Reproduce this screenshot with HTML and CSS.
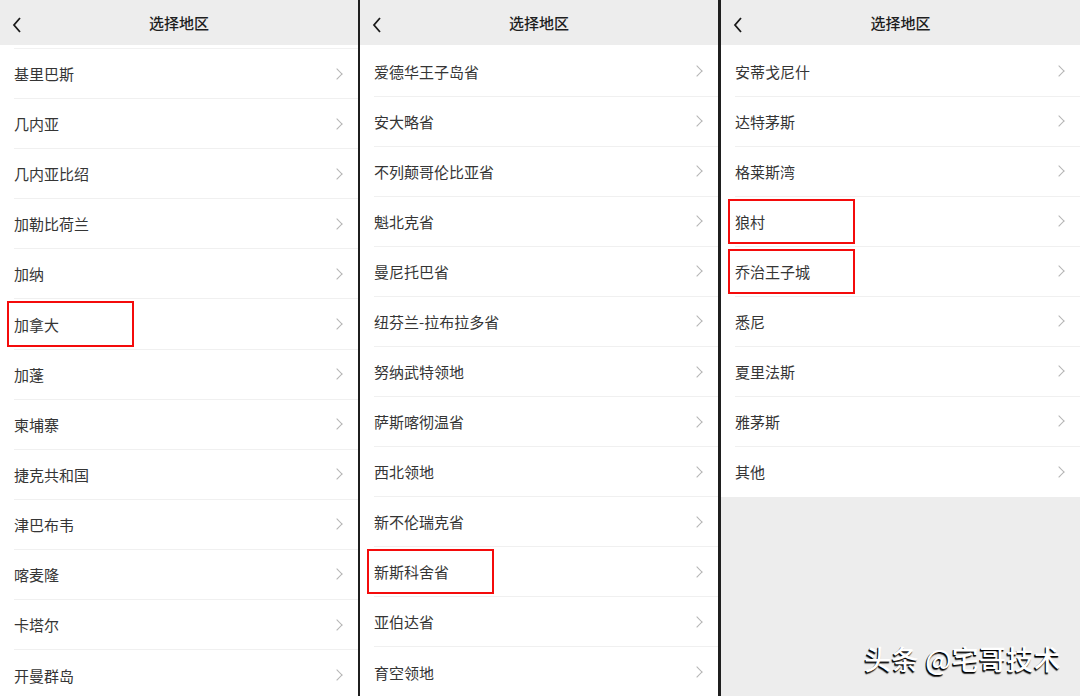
FILE: index.html
```html
<!DOCTYPE html>
<html lang="zh-CN">
<head>
  <meta charset="UTF-8" />
  <meta name="viewport" content="width=device-width, initial-scale=1.0" />
  <title>选择地区</title>
  <link rel="stylesheet" href="styles.css">
</head>
<body>
  <div class="screens">
    <!-- Pantalla 1 -->
    <section class="screen screen--first">
      <header class="topbar">
        <svg class="back" width="10" height="16" viewBox="0 0 10 16"><path d="M8 1 L2 8 L8 15" fill="none" stroke="#1a1a1a" stroke-width="1.8"/></svg>
        <h1>选择地区</h1>
      </header>
      <ul class="list list--scrolled">
        <li class="row"><span>基里巴斯</span><i class="chev"></i></li>
        <li class="row"><span>几内亚</span><i class="chev"></i></li>
        <li class="row"><span>几内亚比绍</span><i class="chev"></i></li>
        <li class="row"><span>加勒比荷兰</span><i class="chev"></i></li>
        <li class="row"><span>加纳</span><i class="chev"></i></li>
        <li class="row row--marked"><span>加拿大</span><i class="chev"></i></li>
        <li class="row"><span>加蓬</span><i class="chev"></i></li>
        <li class="row"><span>柬埔寨</span><i class="chev"></i></li>
        <li class="row"><span>捷克共和国</span><i class="chev"></i></li>
        <li class="row"><span>津巴布韦</span><i class="chev"></i></li>
        <li class="row"><span>喀麦隆</span><i class="chev"></i></li>
        <li class="row"><span>卡塔尔</span><i class="chev"></i></li>
        <li class="row"><span>开曼群岛</span><i class="chev"></i></li>
      </ul>
    </section>

    <!-- Pantalla 2 -->
    <section class="screen screen--second">
      <header class="topbar">
        <svg class="back" width="10" height="16" viewBox="0 0 10 16"><path d="M8 1 L2 8 L8 15" fill="none" stroke="#1a1a1a" stroke-width="1.8"/></svg>
        <h1>选择地区</h1>
      </header>
      <ul class="list">
        <li class="row"><span>爱德华王子岛省</span><i class="chev"></i></li>
        <li class="row"><span>安大略省</span><i class="chev"></i></li>
        <li class="row"><span>不列颠哥伦比亚省</span><i class="chev"></i></li>
        <li class="row"><span>魁北克省</span><i class="chev"></i></li>
        <li class="row"><span>曼尼托巴省</span><i class="chev"></i></li>
        <li class="row"><span>纽芬兰-拉布拉多省</span><i class="chev"></i></li>
        <li class="row"><span>努纳武特领地</span><i class="chev"></i></li>
        <li class="row"><span>萨斯喀彻温省</span><i class="chev"></i></li>
        <li class="row"><span>西北领地</span><i class="chev"></i></li>
        <li class="row"><span>新不伦瑞克省</span><i class="chev"></i></li>
        <li class="row row--marked"><span>新斯科舍省</span><i class="chev"></i></li>
        <li class="row"><span>亚伯达省</span><i class="chev"></i></li>
        <li class="row"><span>育空领地</span><i class="chev"></i></li>
      </ul>
    </section>

    <!-- Pantalla 3 -->
    <section class="screen screen--last">
      <header class="topbar">
        <svg class="back" width="10" height="16" viewBox="0 0 10 16"><path d="M8 1 L2 8 L8 15" fill="none" stroke="#1a1a1a" stroke-width="1.8"/></svg>
        <h1>选择地区</h1>
      </header>
      <ul class="list">
        <li class="row"><span>安蒂戈尼什</span><i class="chev"></i></li>
        <li class="row"><span>达特茅斯</span><i class="chev"></i></li>
        <li class="row"><span>格莱斯湾</span><i class="chev"></i></li>
        <li class="row row--marked"><span>狼村</span><i class="chev"></i></li>
        <li class="row row--marked"><span>乔治王子城</span><i class="chev"></i></li>
        <li class="row"><span>悉尼</span><i class="chev"></i></li>
        <li class="row"><span>夏里法斯</span><i class="chev"></i></li>
        <li class="row"><span>雅茅斯</span><i class="chev"></i></li>
        <li class="row"><span>其他</span><i class="chev"></i></li>
      </ul>
      <div class="watermark">头条 @宅哥技术</div>
    </section>
  </div>
</body>
</html>
```

FILE: styles.css
```css
/* Reset básico */
*, *::before, *::after {
  margin: 0;
  padding: 0;
  box-sizing: border-box;
}
body {
  font-family: "Noto Sans CJK SC", "Noto Sans", sans-serif;
  background: #1f1f1f;
  width: 1080px;
  height: 696px;
  overflow: hidden;
}
.screens {
  display: flex;
  height: 696px;
}
.screen {
  position: relative;
  width: 358px;
  height: 696px;
  background: #ededed;
  overflow: hidden;
  margin-right: 2px;
}
.screen + .screen {
  margin-right: 3px;
}
.screen--last {
  width: 359px;
  margin-right: 0 !important;
}
/* Barra superior */
.topbar {
  height: 45px;
  display: flex;
  align-items: center;
  justify-content: center;
  position: relative;
  background: #ededed;
}
.topbar h1 {
  font-size: 15px;
  font-weight: 500;
  color: #1e1e1e;
  line-height: 1;
}
.back {
  position: absolute;
  left: 12px;
  top: 17px;
}
/* Lista de regiones */
.list {
  list-style: none;
  background: #fff;
  padding-top: 1.5px;
}
.list--scrolled {
  padding-top: 0;
}
.list--scrolled::before {
  content: '';
  display: block;
  height: 4px;
  margin-left: 14px;
  border-bottom: 1px solid #f1f1f1;
}
.row {
  position: relative;
  height: 50px;
  margin-left: 14px;
  padding-right: 15px;
  display: flex;
  align-items: center;
  justify-content: space-between;
  border-bottom: 1px solid #f0f0f0;
  font-size: 15px;
  color: #353535;
}
.screen--first .row {
  height: 50.1px;
}
.screen--second .row {
  height: 50.08px;
}
.row:last-child {
  border-bottom: none;
}
.chev {
  width: 8px;
  height: 8px;
  border-top: 1.2px solid #b5b5b5;
  border-right: 1.2px solid #b5b5b5;
  transform: rotate(45deg);
  margin-right: 2px;
}
/* Marco rojo */
.row--marked::after {
  content: '';
  position: absolute;
  left: -7px;
  top: 2px;
  bottom: 2px;
  width: 127px;
  border: 2px solid #f40b0b;
}
/* Marca de agua */
.watermark {
  position: absolute;
  right: 19px;
  bottom: 22px;
  font-size: 27px;
  font-weight: 500;
  line-height: 30px;
  letter-spacing: 0.3px;
  color: #fff;
  text-shadow: -1px 1px 0 #000, -1px 2px 1px #333;
}
```
